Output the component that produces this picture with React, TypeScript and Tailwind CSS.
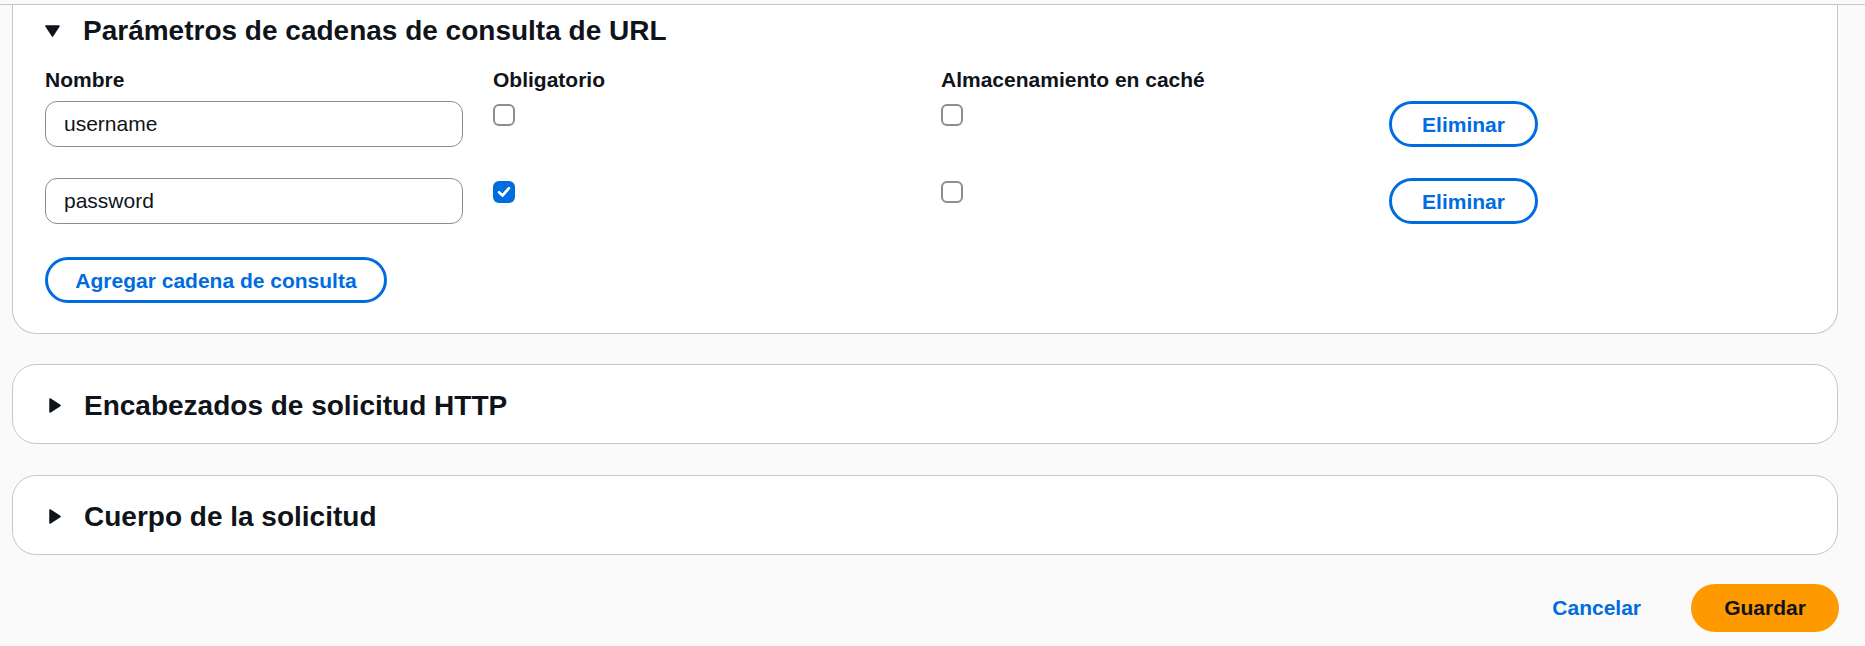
import React from "react";

const font = { fontFamily: '"Liberation Sans", Arial, sans-serif' };

const Caret = ({ open }: { open: boolean }) =>
  open ? (
    <svg width="15" height="12" viewBox="0 0 15 12" className="shrink-0">
      <path d="M1 1 H14 L7.5 11 Z" fill="#0f141a" stroke="#0f141a" strokeWidth="1.5" strokeLinejoin="round" />
    </svg>
  ) : (
    <svg width="12" height="15" viewBox="0 0 12 15" className="shrink-0">
      <path d="M1 1 V14 L11 7.5 Z" fill="#0f141a" stroke="#0f141a" strokeWidth="1.5" strokeLinejoin="round" />
    </svg>
  );

const Checkbox = ({ checked }: { checked?: boolean }) =>
  checked ? (
    <div className="w-[22px] h-[22px] rounded-[6px] bg-[#006ce0] flex items-center justify-center mt-[3px]">
      <svg width="14" height="12" viewBox="0 0 14 12">
        <path
          d="M2 6.3 L5.5 9.5 L12 2.2"
          fill="none"
          stroke="#fff"
          strokeWidth="2.7"
          strokeLinecap="round"
          strokeLinejoin="round"
        />
      </svg>
    </div>
  ) : (
    <div className="w-[22px] h-[22px] rounded-[6px] border-2 border-[#8c8c94] bg-white mt-[3px]" />
  );

const OutlineButton = ({ label, width }: { label: string; width: string }) => (
  <button
    className={`${width} h-[46px] rounded-full border-[3px] border-[#006ce0] bg-white text-[#006ce0] text-[21px] font-bold leading-none`}
  >
    {label}
  </button>
);

const CollapsedSection = ({ title }: { title: string }) => (
  <div className="bg-white border border-[#c6c6cd] rounded-[24px] h-[80px] flex items-center gap-[23px] pl-[36px] pt-[3px]">
    <Caret open={false} />
    <h2 className="text-[28px] font-bold text-[#0f141a] leading-[33px]">{title}</h2>
  </div>
);

export default function App() {
  const rows = [
    { name: "username", required: false },
    { name: "password", required: true },
  ];

  return (
    <div className="min-h-[646px] bg-[#fafafa]" style={font}>
      <div className="h-[5px] border-b border-[#c6c6cd]" />

      <div className="pl-[12px] pr-[27px]">
        {/* Query string params */}
        <div className="bg-white border-x border-b border-[#c6c6cd] rounded-b-[24px] pl-[32px] pr-[30px] pt-[9px] pb-[30px]">
          <div className="flex items-center gap-[23px] h-[33px]">
            <Caret open />
            <h2 className="text-[28px] font-bold text-[#0f141a] leading-[33px]">
              Parámetros de cadenas de consulta de URL
            </h2>
          </div>

          <div className="grid grid-cols-4 gap-x-[30px] mt-[19px] text-[21px] font-bold text-[#0f141a] leading-[28px]">
            <span>Nombre</span>
            <span>Obligatorio</span>
            <span>Almacenamiento en caché</span>
            <span />
          </div>

          <div className="flex flex-col gap-[31px] mt-[7px]">
            {rows.map((row) => (
              <div key={row.name} className="grid grid-cols-4 gap-x-[30px] items-start">
                <div className="h-[46px] rounded-[12px] border border-[#8c8c94] bg-white flex items-center pl-[18px] text-[21px] text-[#0f141a]">
                  {row.name}
                </div>
                <Checkbox checked={row.required} />
                <Checkbox />
                <OutlineButton label="Eliminar" width="w-[149px]" />
              </div>
            ))}
          </div>

          <div className="mt-[33px]">
            <OutlineButton label="Agregar cadena de consulta" width="w-[342px]" />
          </div>
        </div>

        <div className="mt-[30px] flex flex-col gap-[31px]">
          <CollapsedSection title="Encabezados de solicitud HTTP" />
          <CollapsedSection title="Cuerpo de la solicitud" />
        </div>

        {/* Footer actions */}
        <div className="flex justify-end items-center gap-[20px] mt-[29px] mr-[-1px]">
          <button className="h-[48px] px-[30px] text-[21px] font-bold text-[#006ce0]">
            Cancelar
          </button>
          <button className="h-[48px] w-[148px] rounded-full bg-[#ff9900] text-[21px] font-bold text-[#0f141a]">
            Guardar
          </button>
        </div>
      </div>
    </div>
  );
}
